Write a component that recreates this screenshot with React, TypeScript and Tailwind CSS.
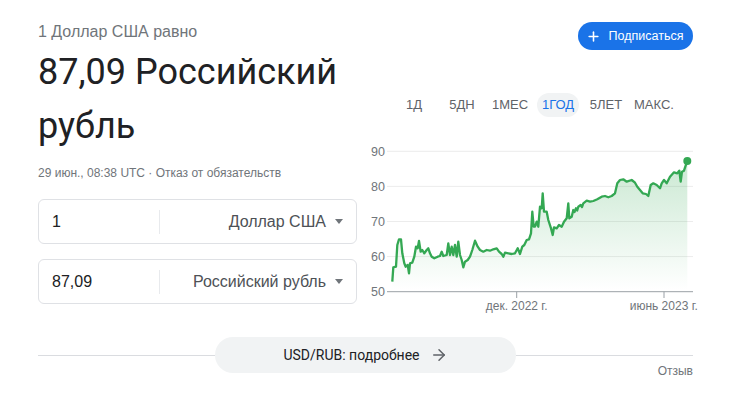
import { Plus, ArrowRight } from 'lucide-react';

const pts =
  '392.3,281.7 393.3,267.3 396,266.7 397.3,245 399,239.3 401,239.3 402.3,253.3 404.3,263.3 405.7,266.7 407.7,265 409,273.3 410,263.3 412.3,262.7 414.3,256.7 416,246.7 417.7,248.3 419,241 420.7,251.7 422.3,250 424.3,253.3 426.7,250 428.3,248.3 430,253.3 431.7,256.7 434.3,258.3 437.7,256.7 440,256 441.7,251.7 443.3,256 446.7,255 448.3,243.3 450,255 451.7,246.7 453.3,255 455,245 456.7,256.7 458.3,241.7 460,255 461.7,260 463.3,267.3 465,261.7 467.7,260 470,256.7 472.3,250 475,240.7 477.7,246.7 480,250 483.3,251.7 486.7,250 490,250.7 493.3,249.3 496.7,248.3 499,251.7 501.7,254 503.3,256.7 505,252.7 508.3,253.3 511.7,254 515,253.3 517.7,248.3 520,254 522.3,246.7 524.3,245 526.7,240 529,239.3 531,233.3 532.3,211.7 533.7,226.7 535,226.7 536.7,221.7 538.3,226.7 540,206.7 541.7,208.3 542.7,193.3 544,211.7 546.7,211.7 548.3,220 550.7,227.3 552.7,235 554,227.3 556.7,228.3 559,225 561.7,226.7 564,221.7 566.7,218.3 568.3,203.3 569.3,218.3 571.7,216.7 573.3,210 574.5,212 576,208.3 577.2,210.5 578.3,206.7 580.7,205 582,207 583.3,203.3 586.7,200.7 590,201.7 593.3,201 597.3,199.3 601.7,196.7 605,196 608.3,197.3 611.7,196 615,193.3 617.3,183.3 620,180 623.3,179.3 626.7,181.7 631.7,180 635,182.7 637.3,186.7 640,190 642.7,193.3 646,194 648.3,196 650.7,185 653.3,183.3 656.7,185 660,188.3 661.7,183.3 664,180 666.7,183.3 670,176.7 674,172.3 677.3,173.3 679.3,170.7 680.7,181.7 682,171.7 684,170.7 685.3,166.7 687.3,161';

const tabs = ['1Д', '5ДН', '1МЕС', '1ГОД', '5ЛЕТ', 'МАКС.'];

function Chart() {
  const line = 'M' + pts.split(' ').join(' L');
  const area = line + ' L687.3,291.7 L392.3,291.7 Z';
  const grid = [
    { v: '90', y: 151.3 },
    { v: '80', y: 186.4 },
    { v: '70', y: 221.5 },
    { v: '60', y: 256.6 },
  ];
  return (
    <svg width="336" height="177" viewBox="357 140 336 177" className="block overflow-visible">
      <defs>
        <linearGradient id="fillg" x1="0" y1="160" x2="0" y2="290" gradientUnits="userSpaceOnUse">
          <stop offset="0" stopColor="#34a853" stopOpacity="0.26" />
          <stop offset="1" stopColor="#34a853" stopOpacity="0" />
        </linearGradient>
      </defs>
      {grid.map((g) => (
        <g key={g.v}>
          <line x1="387" x2="693" y1={g.y} y2={g.y} stroke="#ececec" strokeWidth="1" />
          <text x="385" y={g.y + 4.5} textAnchor="end" fontSize="12.5" fill="#70757a">
            {g.v}
          </text>
        </g>
      ))}
      <text x="385" y="296" textAnchor="end" fontSize="12.5" fill="#70757a">
        50
      </text>
      <path d={area} fill="url(#fillg)" />
      <path d={line} fill="none" stroke="#34a853" strokeWidth="2.3" strokeLinejoin="round" />
      <circle cx="687.3" cy="161" r="4" fill="#34a853" />
      <line x1="387" x2="693" y1="291.7" y2="291.7" stroke="#9aa0a6" strokeWidth="1" />
      <line x1="516.7" x2="516.7" y1="291.7" y2="298" stroke="#9aa0a6" strokeWidth="1" />
      <line x1="664" x2="664" y1="291.7" y2="298" stroke="#9aa0a6" strokeWidth="1" />
      <text x="516.7" y="310" textAnchor="middle" fontSize="12" fill="#70757a">
        дек. 2022 г.
      </text>
      <text x="663.8" y="310" textAnchor="middle" fontSize="12" fill="#70757a">
        июнь 2023 г.
      </text>
    </svg>
  );
}

function Field({ value, unit }: { value: string; unit: string }) {
  return (
    <div className="flex h-[45px] items-center rounded-md border border-[#dfe1e5]">
      <div className="w-[120px] pl-[13px] text-[16px] text-[#202124]">{value}</div>
      <div className="h-[24px] w-px bg-[#e8eaed]" />
      <div className="flex flex-1 items-center justify-end pr-[13px] text-[16px] text-[#4d5156]">
        <span>{unit}</span>
        <span className="ml-[9px] h-0 w-0 border-x-[4.5px] border-t-[5px] border-x-transparent border-t-[#70757a]" />
      </div>
    </div>
  );
}

export default function App() {
  return (
    <div className="h-[416px] w-[740px] overflow-hidden bg-white pl-[38px] pr-[47px] pt-[20px] font-['Liberation_Sans',Arial,sans-serif]">
      <div className="flex h-[317px]">
        <div className="w-[319px]">
          <div className="text-[16px] leading-[24px] text-[#70757a]">1 Доллар США равно</div>
          <div className="mt-[1px] font-['Roboto',sans-serif] text-[36px] leading-[54px] text-[#202124]">
            87,09 Российский рубль
          </div>
          <div className="mt-[12px] text-[12px] leading-[16px] text-[#70757a]">
            29 июн., 08:38 UTC · Отказ от обязательств
          </div>
          <div className="mt-[18px] flex flex-col gap-[15px]">
            <Field value="1" unit="Доллар США" />
            <Field value="87,09" unit="Российский рубль" />
          </div>
        </div>
        <div className="flex-1">
          <div className="mt-[2px] flex justify-end">
            <button className="flex h-[28px] w-[115px] items-center justify-center gap-[8px] rounded-full bg-[#1a73e8] pr-[2px] text-[12.5px] text-white">
              <Plus size={15} strokeWidth={2.5} />
              <span>Подписаться</span>
            </button>
          </div>
          <div className="mt-[43px] flex pl-[33px]">
            {tabs.map((t) => (
              <div key={t} className="flex h-[24px] w-[48px] items-center justify-center">
                <span
                  className={
                    t === '1ГОД'
                      ? 'flex h-[24px] items-center rounded-full bg-[#f1f3f4] px-[5px] text-[13px] text-[#1a73e8]'
                      : 'text-[13px] text-[#5f6368]'
                  }
                >
                  {t}
                </span>
              </div>
            ))}
          </div>
          <div className="mt-[23px]">
            <Chart />
          </div>
        </div>
      </div>
      <div className="flex h-[36px] items-center">
        <div className="h-px flex-1 bg-[#dadce0]" />
        <div className="flex h-[36px] w-[301px] items-center justify-center gap-[10px] rounded-full bg-[#f1f3f4] font-['Roboto',sans-serif] text-[14px] text-[#202124]">
          <span>USD/RUB: подробнее</span>
          <ArrowRight size={18} className="text-[#5f6368]" />
        </div>
        <div className="h-px flex-1 bg-[#dadce0]" />
      </div>
      <div className="-mt-[10px] text-right text-[12px] leading-[16px] text-[#70757a]">Отзыв</div>
    </div>
  );
}
